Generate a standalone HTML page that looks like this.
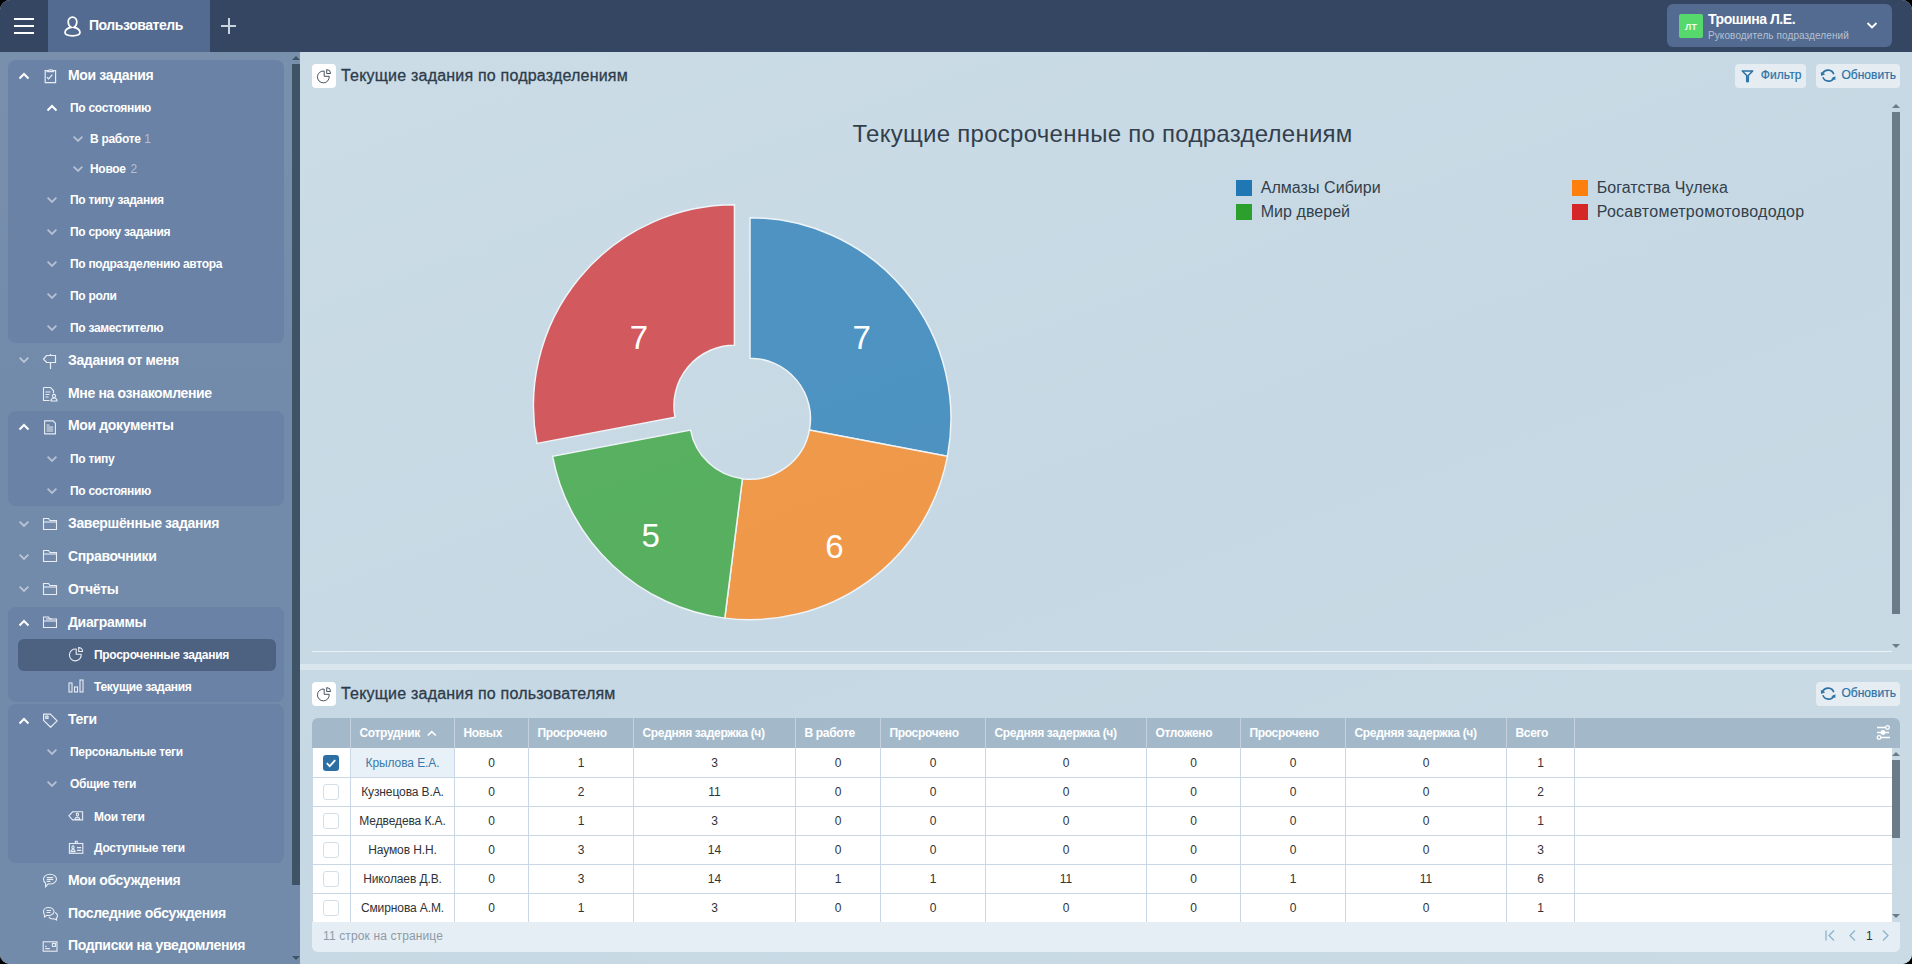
<!DOCTYPE html><html><head><meta charset="utf-8"><style>
html,body{margin:0;padding:0;background:#000;}
body{width:1912px;height:964px;overflow:hidden;position:relative;font-family:"Liberation Sans", sans-serif;}
.win{position:absolute;left:0;top:0;width:1912px;height:964px;border-radius:10px;overflow:hidden;background:#c8dae5;}
.t{position:absolute;white-space:nowrap;}
.b{position:absolute;}
</style></head><body><div class="win">

<div class="b" style="left:300px;top:52px;width:1612px;height:912px;background:linear-gradient(160deg,#cbdce7 0%,#c6d8e3 50%,#cadbe6 100%);"></div>
<div class="b" style="left:0px;top:52px;width:300px;height:912px;background:linear-gradient(180deg,#7990ad 0%,#738bab 35%,#728baa 100%);"></div>
<div class="b" style="left:0px;top:0px;width:1912px;height:52px;background:#344662;"></div>
<div class="b" style="left:48px;top:0px;width:162px;height:52px;background:#546b91;"></div>
<div class="b" style="left:14px;top:18px;width:20px;height:2px;background:#ffffff;"></div>
<div class="b" style="left:14px;top:25px;width:20px;height:2px;background:#ffffff;"></div>
<div class="b" style="left:14px;top:32px;width:20px;height:2px;background:#ffffff;"></div>
<svg class="b" style="left:63px;top:15px;" width="19" height="23" viewBox="0 0 19 23"><path d="M9.5 2.2c-2.6 0-4.3 2-4.3 4.6 0 2.3 1.3 4.6 2.9 5.5-3.7.7-6.1 2.7-6.1 5.3 0 2.2 2.6 3.2 7.5 3.2s7.5-1 7.5-3.2c0-2.6-2.4-4.6-6.1-5.3 1.6-.9 2.9-3.2 2.9-5.5 0-2.6-1.7-4.6-4.3-4.6z" fill="none" stroke="#fff" stroke-width="1.7"/></svg>
<div class="t" style="left:89px;top:16.37px;font-size:14px;line-height:18px;color:#fff;font-weight:bold;letter-spacing:-0.45px;">Пользователь</div>
<div class="b" style="left:221px;top:25px;width:15px;height:2px;background:#c9d3df;"></div>
<div class="b" style="left:227.5px;top:18px;width:2px;height:16px;background:#c9d3df;"></div>
<div class="b" style="left:1667px;top:4px;width:225px;height:43px;background:#546b91;border-radius:6px;"></div>
<div class="b" style="left:1679px;top:14px;width:24px;height:24px;background:#57d86d;border-radius:2px;"></div>
<div class="t" style="left:1679.0px;width:24px;text-align:center;top:20.76px;font-size:9.5px;line-height:12px;color:#fff;-webkit-text-stroke:0.2px #fff;">ЛТ</div>
<div class="t" style="left:1708px;top:10.37px;font-size:14px;line-height:18px;color:#fff;font-weight:bold;letter-spacing:-0.45px;">Трошина Л.Е.</div>
<div class="t" style="left:1708px;top:29.99px;font-size:10px;line-height:12px;color:#b4c0d0;letter-spacing:0.1px;">Руководитель подразделений</div>
<svg class="b" style="left:1866px;top:21px;" width="12" height="9" viewBox="0 0 12 9"><path d="M1.5 2l4.5 4.5 4.5-4.5" fill="none" stroke="#fff" stroke-width="1.8"/></svg>
<div class="b" style="left:8px;top:60px;width:276px;height:283px;background:#6a82a6;border-radius:8px;"></div>
<div class="b" style="left:8px;top:411px;width:276px;height:95px;background:#6a82a6;border-radius:8px;"></div>
<div class="b" style="left:8px;top:607px;width:276px;height:95px;background:#6a82a6;border-radius:8px;"></div>
<div class="b" style="left:8px;top:704px;width:276px;height:159px;background:#6a82a6;border-radius:8px;"></div>
<div class="b" style="left:18px;top:639px;width:258px;height:32px;background:#4d6181;border-radius:6px;"></div>
<svg class="b" style="left:292px;top:55px;" width="8" height="6" viewBox="0 0 8 6"><path d="M0 5L4 1L8 5z" fill="#3f5366"/></svg>
<div class="b" style="left:292px;top:64px;width:8px;height:821px;background:#3f5366;"></div>
<svg class="b" style="left:292px;top:955px;" width="8" height="6" viewBox="0 0 8 6"><path d="M0 1L4 5L8 1z" fill="#3f5366"/></svg>
<svg class="b" style="left:18px;top:72px;" width="12" height="8" viewBox="0 0 12 8"><path d="M1.5 6.5L6 2L10.5 6.5" fill="none" stroke="#fff" stroke-width="2"/></svg>
<svg class="b" style="left:42px;top:68px;margin-left:1px" width="16" height="16" viewBox="0 0 16 16"><g fill="none" stroke="#e8edf4" stroke-width="1.2"><path d="M4.3 2.6H2.2V14.7H12.6V2.6H10.5"/><path d="M4.3 3.6C4.3 1.4 10.5 1.4 10.5 3.6Z"/><path d="M3.9 9.3L5.6 10.8L9.4 6.6"/></g></svg>
<div class="t" style="left:68px;top:65.87px;font-size:14px;line-height:18px;color:#fff;font-weight:bold;letter-spacing:-0.35px;">Мои задания</div>
<svg class="b" style="left:46px;top:104px;" width="12" height="8" viewBox="0 0 12 8"><path d="M1.5 6.5L6 2L10.5 6.5" fill="none" stroke="#fff" stroke-width="2"/></svg>
<div class="t" style="left:70px;top:101.43px;font-size:12px;line-height:15px;color:#fff;font-weight:bold;letter-spacing:-0.3px;">По состоянию</div>
<svg class="b" style="left:72px;top:135.0px;" width="12" height="8" viewBox="0 0 12 8"><path d="M1.6 1.6L6 6L10.4 1.6" fill="none" stroke="rgba(255,255,255,0.5)" stroke-width="1.8"/></svg>
<div class="t" style="left:90px;top:132.23px;font-size:12px;line-height:15px;color:#fff;font-weight:bold;letter-spacing:-0.3px;">В работе</div>
<svg class="b" style="left:72px;top:165.0px;" width="12" height="8" viewBox="0 0 12 8"><path d="M1.6 1.6L6 6L10.4 1.6" fill="none" stroke="rgba(255,255,255,0.5)" stroke-width="1.8"/></svg>
<div class="t" style="left:90px;top:162.23px;font-size:12px;line-height:15px;color:#fff;font-weight:bold;letter-spacing:-0.3px;">Новое</div>
<svg class="b" style="left:46px;top:195.89999999999998px;" width="12" height="8" viewBox="0 0 12 8"><path d="M1.6 1.6L6 6L10.4 1.6" fill="none" stroke="rgba(255,255,255,0.5)" stroke-width="1.8"/></svg>
<div class="t" style="left:70px;top:193.13px;font-size:12px;line-height:15px;color:#fff;font-weight:bold;letter-spacing:-0.3px;">По типу задания</div>
<svg class="b" style="left:46px;top:227.89999999999998px;" width="12" height="8" viewBox="0 0 12 8"><path d="M1.6 1.6L6 6L10.4 1.6" fill="none" stroke="rgba(255,255,255,0.5)" stroke-width="1.8"/></svg>
<div class="t" style="left:70px;top:225.13px;font-size:12px;line-height:15px;color:#fff;font-weight:bold;letter-spacing:-0.3px;">По сроку задания</div>
<svg class="b" style="left:46px;top:259.8px;" width="12" height="8" viewBox="0 0 12 8"><path d="M1.6 1.6L6 6L10.4 1.6" fill="none" stroke="rgba(255,255,255,0.5)" stroke-width="1.8"/></svg>
<div class="t" style="left:70px;top:257.03px;font-size:12px;line-height:15px;color:#fff;font-weight:bold;letter-spacing:-0.3px;">По подразделению автора</div>
<svg class="b" style="left:46px;top:291.8px;" width="12" height="8" viewBox="0 0 12 8"><path d="M1.6 1.6L6 6L10.4 1.6" fill="none" stroke="rgba(255,255,255,0.5)" stroke-width="1.8"/></svg>
<div class="t" style="left:70px;top:289.03px;font-size:12px;line-height:15px;color:#fff;font-weight:bold;letter-spacing:-0.3px;">По роли</div>
<svg class="b" style="left:46px;top:323.8px;" width="12" height="8" viewBox="0 0 12 8"><path d="M1.6 1.6L6 6L10.4 1.6" fill="none" stroke="rgba(255,255,255,0.5)" stroke-width="1.8"/></svg>
<div class="t" style="left:70px;top:321.03px;font-size:12px;line-height:15px;color:#fff;font-weight:bold;letter-spacing:-0.3px;">По заместителю</div>
<svg class="b" style="left:18px;top:356.4px;" width="12" height="8" viewBox="0 0 12 8"><path d="M1.6 1.6L6 6L10.4 1.6" fill="none" stroke="rgba(255,255,255,0.5)" stroke-width="1.8"/></svg>
<svg class="b" style="left:42px;top:353px;" width="16" height="16" viewBox="0 0 16 16"><g fill="none" stroke="#e8edf4" stroke-width="1.2"><path d="M4.5 2.5h9v7h-9L1.5 6z"/><path d="M8.5 9.5v6.5M8.5 1v1.5"/></g></svg>
<div class="t" style="left:68px;top:350.87px;font-size:14px;line-height:18px;color:#fff;font-weight:bold;letter-spacing:-0.35px;">Задания от меня</div>
<svg class="b" style="left:42px;top:386px;" width="16" height="16" viewBox="0 0 16 16"><g fill="none" stroke="#e8edf4" stroke-width="1.1"><path d="M1.5 1.5h7l3 3v3"/><path d="M1.5 1.5v13h6"/><path d="M3.5 6h5M3.5 8.5h4M3.5 11h3"/><circle cx="12" cy="10" r="1.6"/><path d="M9 15c0-1.8 1.3-3 3-3s3 1.2 3 3z"/></g></svg>
<div class="t" style="left:68px;top:383.87px;font-size:14px;line-height:18px;color:#fff;font-weight:bold;letter-spacing:-0.35px;">Мне на ознакомление</div>
<svg class="b" style="left:18px;top:422.6px;" width="12" height="8" viewBox="0 0 12 8"><path d="M1.5 6.5L6 2L10.5 6.5" fill="none" stroke="#fff" stroke-width="2"/></svg>
<svg class="b" style="left:42px;top:418.6px;margin-left:1px" width="16" height="16" viewBox="0 0 16 16"><g fill="none" stroke="#e8edf4" stroke-width="1.1"><path d="M1.6 1.9H10L12.4 4.3V14.9H1.6Z"/><path d="M3.6 6h2.8M3.6 8h6.6M3.6 10h6.6M3.6 12h6.6"/></g></svg>
<div class="t" style="left:68px;top:416.47px;font-size:14px;line-height:18px;color:#fff;font-weight:bold;letter-spacing:-0.35px;">Мои документы</div>
<svg class="b" style="left:46px;top:454.9px;" width="12" height="8" viewBox="0 0 12 8"><path d="M1.6 1.6L6 6L10.4 1.6" fill="none" stroke="rgba(255,255,255,0.5)" stroke-width="1.8"/></svg>
<div class="t" style="left:70px;top:452.13px;font-size:12px;line-height:15px;color:#fff;font-weight:bold;letter-spacing:-0.3px;">По типу</div>
<svg class="b" style="left:46px;top:486.9px;" width="12" height="8" viewBox="0 0 12 8"><path d="M1.6 1.6L6 6L10.4 1.6" fill="none" stroke="rgba(255,255,255,0.5)" stroke-width="1.8"/></svg>
<div class="t" style="left:70px;top:484.13px;font-size:12px;line-height:15px;color:#fff;font-weight:bold;letter-spacing:-0.3px;">По состоянию</div>
<svg class="b" style="left:18px;top:519.9px;" width="12" height="8" viewBox="0 0 12 8"><path d="M1.6 1.6L6 6L10.4 1.6" fill="none" stroke="rgba(255,255,255,0.5)" stroke-width="1.8"/></svg>
<svg class="b" style="left:42px;top:516.5px;" width="16" height="14" viewBox="0 0 16 14"><g fill="none" stroke="#e8edf4" stroke-width="1.1"><path d="M1.5 1.5h5l1.5 2h6.5v9h-13z"/><path d="M1.5 5h13"/></g></svg>
<div class="t" style="left:68px;top:514.37px;font-size:14px;line-height:18px;color:#fff;font-weight:bold;letter-spacing:-0.35px;">Завершённые задания</div>
<svg class="b" style="left:18px;top:552.8px;" width="12" height="8" viewBox="0 0 12 8"><path d="M1.6 1.6L6 6L10.4 1.6" fill="none" stroke="rgba(255,255,255,0.5)" stroke-width="1.8"/></svg>
<svg class="b" style="left:42px;top:549.4px;" width="16" height="14" viewBox="0 0 16 14"><g fill="none" stroke="#e8edf4" stroke-width="1.1"><path d="M1.5 1.5h5l1.5 2h6.5v9h-13z"/><path d="M1.5 5h13"/></g></svg>
<div class="t" style="left:68px;top:547.27px;font-size:14px;line-height:18px;color:#fff;font-weight:bold;letter-spacing:-0.35px;">Справочники</div>
<svg class="b" style="left:18px;top:585.1px;" width="12" height="8" viewBox="0 0 12 8"><path d="M1.6 1.6L6 6L10.4 1.6" fill="none" stroke="rgba(255,255,255,0.5)" stroke-width="1.8"/></svg>
<svg class="b" style="left:42px;top:581.7px;" width="16" height="14" viewBox="0 0 16 14"><g fill="none" stroke="#e8edf4" stroke-width="1.1"><path d="M1.5 1.5h5l1.5 2h6.5v9h-13z"/><path d="M1.5 5h13"/></g></svg>
<div class="t" style="left:68px;top:579.57px;font-size:14px;line-height:18px;color:#fff;font-weight:bold;letter-spacing:-0.35px;">Отчёты</div>
<svg class="b" style="left:18px;top:619.3px;" width="12" height="8" viewBox="0 0 12 8"><path d="M1.5 6.5L6 2L10.5 6.5" fill="none" stroke="#fff" stroke-width="2"/></svg>
<svg class="b" style="left:42px;top:615.3px;" width="16" height="14" viewBox="0 0 16 14"><g fill="none" stroke="#e8edf4" stroke-width="1.1"><path d="M1.5 2h5l1.5 2h6.5v8.5h-13z"/><path d="M1.5 6h13"/><path d="M4 4h6"/></g></svg>
<div class="t" style="left:68px;top:613.17px;font-size:14px;line-height:18px;color:#fff;font-weight:bold;letter-spacing:-0.35px;">Диаграммы</div>
<svg class="b" style="left:68px;top:647px;" width="16" height="15" viewBox="0 0 16 15"><g fill="none" stroke="#e8edf4" stroke-width="1.1"><path d="M8.2 2.1A5.9 5.9 0 1 0 13.2 7.3H8.2Z"/><path d="M10.7 0.6V4.5H14.6A3.9 3.9 0 0 0 10.7 0.6Z"/></g></svg>
<div class="t" style="left:94px;top:648.43px;font-size:12px;line-height:15px;color:#fff;font-weight:bold;letter-spacing:-0.3px;">Просроченные задания</div>
<svg class="b" style="left:68px;top:679px;" width="16" height="14" viewBox="0 0 16 14"><g fill="none" stroke="#e8edf4" stroke-width="1.1"><rect x="1" y="4" width="3" height="9"/><rect x="6.5" y="8" width="3" height="5"/><rect x="12" y="1" width="3" height="12"/></g></svg>
<div class="t" style="left:94px;top:680.43px;font-size:12px;line-height:15px;color:#fff;font-weight:bold;letter-spacing:-0.3px;">Текущие задания</div>
<svg class="b" style="left:18px;top:716.6px;" width="12" height="8" viewBox="0 0 12 8"><path d="M1.5 6.5L6 2L10.5 6.5" fill="none" stroke="#fff" stroke-width="2"/></svg>
<svg class="b" style="left:42px;top:712.6px;margin-left:1px" width="16" height="16" viewBox="0 0 16 16"><g fill="none" stroke="#e8edf4" stroke-width="1.2" stroke-linejoin="round"><path d="M0.6 1.1H7.4L14.1 7.9L7.6 14.2L0.6 7.4Z"/><rect x="2.8" y="3.2" width="2.2" height="2.2"/></g></svg>
<div class="t" style="left:68px;top:710.47px;font-size:14px;line-height:18px;color:#fff;font-weight:bold;letter-spacing:-0.35px;">Теги</div>
<svg class="b" style="left:46px;top:748.2px;" width="12" height="8" viewBox="0 0 12 8"><path d="M1.6 1.6L6 6L10.4 1.6" fill="none" stroke="rgba(255,255,255,0.5)" stroke-width="1.8"/></svg>
<div class="t" style="left:70px;top:745.43px;font-size:12px;line-height:15px;color:#fff;font-weight:bold;letter-spacing:-0.3px;">Персональные теги</div>
<svg class="b" style="left:46px;top:780.2px;" width="12" height="8" viewBox="0 0 12 8"><path d="M1.6 1.6L6 6L10.4 1.6" fill="none" stroke="rgba(255,255,255,0.5)" stroke-width="1.8"/></svg>
<div class="t" style="left:70px;top:777.43px;font-size:12px;line-height:15px;color:#fff;font-weight:bold;letter-spacing:-0.3px;">Общие теги</div>
<svg class="b" style="left:68px;top:810.5px;" width="16" height="12" viewBox="0 0 16 12"><g fill="none" stroke="#e8edf4" stroke-width="1.1"><path d="M4.6 0.8H14.6V8.9H4.6L0.9 4.85Z"/><ellipse cx="9.4" cy="3.6" rx="1.1" ry="1.5"/><path d="M7.2 8.4V7.6C7.2 6.7 8.2 6.3 9.4 6.3S11.6 6.7 11.6 7.6V8.4Z"/></g></svg>
<div class="t" style="left:94px;top:809.93px;font-size:12px;line-height:15px;color:#fff;font-weight:bold;letter-spacing:-0.3px;">Мои теги</div>
<svg class="b" style="left:68px;top:840px;" width="16" height="16" viewBox="0 0 16 16"><g fill="none" stroke="#e8edf4" stroke-width="1.1"><rect x="1.4" y="3.5" width="13.4" height="9.8"/><path d="M7.4 3.5V1.2H9.2V3.5"/><ellipse cx="5" cy="7.3" rx="1.1" ry="1.4"/><path d="M3 11.6V10.8C3 10 3.9 9.6 5 9.6S7 10 7 10.8V11.6Z"/><path d="M9 7.6h4.2M9 10.4h4.2"/></g></svg>
<div class="t" style="left:94px;top:841.43px;font-size:12px;line-height:15px;color:#fff;font-weight:bold;letter-spacing:-0.3px;">Доступные теги</div>
<svg class="b" style="left:42px;top:872.8px;" width="16" height="16" viewBox="0 0 16 16"><g fill="none" stroke="#e8edf4" stroke-width="1.1"><path d="M8 1.2c3.6 0 6.5 2.1 6.5 4.9s-2.9 4.9-6.5 4.9c-.6 0-1.2-.1-1.8-.2L3.6 13.8V10.2C2.3 9.3 1.5 7.8 1.5 6.1c0-2.8 2.9-4.9 6.5-4.9z"/><path d="M4.8 4.6h6.4M4.8 6.5h6.4M4.8 8.4h3.6"/></g></svg>
<div class="t" style="left:68px;top:870.67px;font-size:14px;line-height:18px;color:#fff;font-weight:bold;letter-spacing:-0.35px;">Мои обсуждения</div>
<svg class="b" style="left:42px;top:906px;" width="17" height="16" viewBox="0 0 17 16"><g fill="none" stroke="#e8edf4" stroke-width="1.1"><path d="M6.5 1.5c3 0 5.5 1.8 5.5 4s-2.5 4-5.5 4c-.6 0-1.1 0-1.6-.2L2.5 11V8.6C1.8 7.8 1.5 6.7 1.5 5.5c0-2.2 2.2-4 5-4z"/><path d="M4.5 4.5h4.5M4.5 6.5h4"/><path d="M13 6.5c1.5.7 2.5 1.9 2.5 3.3 0 1-.4 1.8-1 2.5V14l-2-1.2c-.5.1-.9.2-1.5.2-2 0-3.6-.9-4.2-2.2"/></g></svg>
<div class="t" style="left:68px;top:903.87px;font-size:14px;line-height:18px;color:#fff;font-weight:bold;letter-spacing:-0.35px;">Последние обсуждения</div>
<svg class="b" style="left:42px;top:940.5px;" width="16" height="12" viewBox="0 0 16 12"><g fill="none" stroke="#e8edf4" stroke-width="1.1"><rect x="1.2" y="0.8" width="13.8" height="9.4"/><path d="M3.2 7.6h4.6M3.2 5.4h1.4"/><rect x="10.4" y="2.4" width="3" height="3"/></g></svg>
<div class="t" style="left:68px;top:936.37px;font-size:14px;line-height:18px;color:#fff;font-weight:bold;letter-spacing:-0.35px;">Подписки на уведомления</div>
<div class="t" style="left:144.3px;top:132.23px;font-size:12px;line-height:15px;color:rgba(255,255,255,0.5);">1</div>
<div class="t" style="left:130.5px;top:162.23px;font-size:12px;line-height:15px;color:rgba(255,255,255,0.5);">2</div>
<div class="b" style="left:312px;top:64px;width:24px;height:24px;background:#ffffff;border-radius:4px;"></div>
<svg class="b" style="left:316px;top:69px;" width="16" height="15" viewBox="0 0 16 15"><g fill="none" stroke="#34404d" stroke-width="0.9"><path d="M8.2 2.1A5.9 5.9 0 1 0 13.2 7.3H8.2Z"/><path d="M10.7 0.6V4.5H14.6A3.9 3.9 0 0 0 10.7 0.6Z"/></g></svg>
<div class="t" style="left:341px;top:65.91px;font-size:16px;line-height:20px;color:#2d3b4b;letter-spacing:0.2px;-webkit-text-stroke:0.3px #2d3b4b;">Текущие задания по подразделениям</div>
<div class="b" style="left:1735px;top:64px;width:71px;height:24px;background:#e5edf3;border-radius:4px;"></div>
<svg class="b" style="left:1740px;top:69px;" width="15" height="15" viewBox="0 0 15 15"><path d="M2.3 1.9H12.7L8.3 6.6V11.9A0.8 0.8 0 0 1 6.7 11.9V6.6Z" fill="none" stroke="#2b72a6" stroke-width="1.5" stroke-linejoin="round"/></svg>
<div class="t" style="left:1760.7px;top:68.43px;font-size:12px;line-height:15px;color:#2b72a6;letter-spacing:0.1px;-webkit-text-stroke:0.2px #2b72a6;">Фильтр</div>
<div class="b" style="left:1816px;top:64px;width:84px;height:24px;background:#e5edf3;border-radius:4px;"></div>
<svg class="b" style="left:1819px;top:68px;" width="18" height="17" viewBox="0 0 18 17"><g fill="none" stroke="#2b72a6" stroke-width="1.6"><path d="M14.8 6.3A6.1 6.1 0 0 0 3.6 5.4"/><path d="M3.9 9.3A6.1 6.1 0 0 0 15.1 9.6"/></g><path d="M1.8 4L2.2 8L6.3 6.2z" fill="#2b72a6"/><path d="M16.5 8.2L16.3 11.9L12.3 10.2z" fill="#2b72a6"/></svg>
<div class="t" style="left:1841.4px;top:68.43px;font-size:12px;line-height:15px;color:#2b72a6;letter-spacing:0.03px;-webkit-text-stroke:0.2px #2b72a6;">Обновить</div>
<div class="t" style="left:852.5px;top:118.87px;font-size:24px;line-height:30px;color:#333f4c;letter-spacing:0.27px;">Текущие просроченные по подразделениям</div>
<div class="b" style="left:1236px;top:180px;width:16px;height:16px;background:#1f77b4;"></div>
<div class="t" style="left:1260.7px;top:178.11px;font-size:16px;line-height:20px;color:#333f4c;letter-spacing:0.05px;">Алмазы Сибири</div>
<div class="b" style="left:1236px;top:204px;width:16px;height:16px;background:#2ca02c;"></div>
<div class="t" style="left:1260.7px;top:202.11px;font-size:16px;line-height:20px;color:#333f4c;letter-spacing:0.05px;">Мир дверей</div>
<div class="b" style="left:1572px;top:180px;width:16px;height:16px;background:#ff7f0e;"></div>
<div class="t" style="left:1596.7px;top:178.11px;font-size:16px;line-height:20px;color:#333f4c;letter-spacing:0.05px;">Богатства Чулека</div>
<div class="b" style="left:1572px;top:204px;width:16px;height:16px;background:#d62728;"></div>
<div class="t" style="left:1596.7px;top:202.11px;font-size:16px;line-height:20px;color:#333f4c;letter-spacing:0.25px;">Росавтометромотовододор</div>
<svg class="b" style="left:0;top:0" width="1912" height="964"><path d="M750.00,217.70A201,201 0 0 1 947.44,456.36L809.43,430.04A60.5,60.5 0 0 0 750.00,358.20Z" fill="#1f77b4" fill-opacity="0.72" stroke="#eef4f8" stroke-width="1.5"/><path d="M947.44,456.36A201,201 0 0 1 724.81,618.12L742.42,478.72A60.5,60.5 0 0 0 809.43,430.04Z" fill="#ff7f0e" fill-opacity="0.72" stroke="#eef4f8" stroke-width="1.5"/><path d="M724.81,618.12A201,201 0 0 1 552.56,456.36L690.57,430.04A60.5,60.5 0 0 0 742.42,478.72Z" fill="#2ca02c" fill-opacity="0.72" stroke="#eef4f8" stroke-width="1.5"/><path d="M537.00,443.49A201,201 0 0 1 734.44,204.82L734.44,345.32A60.5,60.5 0 0 0 675.01,417.16Z" fill="#d62728" fill-opacity="0.72" stroke="#eef4f8" stroke-width="1.5"/><text x="638.9" y="348.9" font-family="Liberation Sans" font-size="33" fill="#fff" text-anchor="middle">7</text><text x="861.7" y="348.9" font-family="Liberation Sans" font-size="33" fill="#fff" text-anchor="middle">7</text><text x="650.8" y="546.7" font-family="Liberation Sans" font-size="33" fill="#fff" text-anchor="middle">5</text><text x="834.5" y="557.9" font-family="Liberation Sans" font-size="33" fill="#fff" text-anchor="middle">6</text></svg>
<svg class="b" style="left:1892px;top:103px;" width="8" height="6" viewBox="0 0 8 6"><path d="M0 5L4 1L8 5z" fill="#6b7c88"/></svg>
<div class="b" style="left:1892px;top:112px;width:8px;height:502px;background:#6b7c88;"></div>
<svg class="b" style="left:1892px;top:643px;" width="8" height="6" viewBox="0 0 8 6"><path d="M0 1L4 5L8 1z" fill="#6b7c88"/></svg>
<div class="b" style="left:312px;top:651px;width:1580px;height:1px;background:#eaf2f7;"></div>
<div class="b" style="left:300px;top:664px;width:1612px;height:6px;background:#d9e6ee;"></div>
<div class="b" style="left:312px;top:682px;width:24px;height:24px;background:#ffffff;border-radius:4px;"></div>
<svg class="b" style="left:316px;top:687px;" width="16" height="15" viewBox="0 0 16 15"><g fill="none" stroke="#34404d" stroke-width="0.9"><path d="M8.2 2.1A5.9 5.9 0 1 0 13.2 7.3H8.2Z"/><path d="M10.7 0.6V4.5H14.6A3.9 3.9 0 0 0 10.7 0.6Z"/></g></svg>
<div class="t" style="left:341px;top:684.01px;font-size:16px;line-height:20px;color:#2d3b4b;letter-spacing:0.2px;-webkit-text-stroke:0.3px #2d3b4b;">Текущие задания по пользователям</div>
<div class="b" style="left:1816px;top:682px;width:84px;height:24px;background:#e5edf3;border-radius:4px;"></div>
<svg class="b" style="left:1819px;top:686px;" width="18" height="17" viewBox="0 0 18 17"><g fill="none" stroke="#2b72a6" stroke-width="1.6"><path d="M14.8 6.3A6.1 6.1 0 0 0 3.6 5.4"/><path d="M3.9 9.3A6.1 6.1 0 0 0 15.1 9.6"/></g><path d="M1.8 4L2.2 8L6.3 6.2z" fill="#2b72a6"/><path d="M16.5 8.2L16.3 11.9L12.3 10.2z" fill="#2b72a6"/></svg>
<div class="t" style="left:1841.4px;top:686.43px;font-size:12px;line-height:15px;color:#2b72a6;letter-spacing:0.03px;-webkit-text-stroke:0.2px #2b72a6;">Обновить</div>
<div class="b" style="left:312px;top:718px;width:1588px;height:30px;background:#a3b9ca;border-radius:6px 6px 0 0;"></div>
<div class="b" style="left:312px;top:748px;width:1580px;height:174px;background:#ffffff;"></div>
<div class="b" style="left:312px;top:922px;width:1588px;height:30px;background:#e6eef5;border-radius:0 0 6px 6px;"></div>
<div class="b" style="left:350px;top:748px;width:104px;height:29px;background:#e9f1f8;"></div>
<div class="b" style="left:350px;top:718px;width:1px;height:30px;background:#c3d2de;"></div>
<div class="b" style="left:350px;top:748px;width:1px;height:174px;background:#c9d8e4;"></div>
<div class="b" style="left:454px;top:718px;width:1px;height:30px;background:#c3d2de;"></div>
<div class="b" style="left:454px;top:748px;width:1px;height:174px;background:#c9d8e4;"></div>
<div class="b" style="left:528px;top:718px;width:1px;height:30px;background:#c3d2de;"></div>
<div class="b" style="left:528px;top:748px;width:1px;height:174px;background:#c9d8e4;"></div>
<div class="b" style="left:633px;top:718px;width:1px;height:30px;background:#c3d2de;"></div>
<div class="b" style="left:633px;top:748px;width:1px;height:174px;background:#c9d8e4;"></div>
<div class="b" style="left:795px;top:718px;width:1px;height:30px;background:#c3d2de;"></div>
<div class="b" style="left:795px;top:748px;width:1px;height:174px;background:#c9d8e4;"></div>
<div class="b" style="left:880px;top:718px;width:1px;height:30px;background:#c3d2de;"></div>
<div class="b" style="left:880px;top:748px;width:1px;height:174px;background:#c9d8e4;"></div>
<div class="b" style="left:985px;top:718px;width:1px;height:30px;background:#c3d2de;"></div>
<div class="b" style="left:985px;top:748px;width:1px;height:174px;background:#c9d8e4;"></div>
<div class="b" style="left:1146px;top:718px;width:1px;height:30px;background:#c3d2de;"></div>
<div class="b" style="left:1146px;top:748px;width:1px;height:174px;background:#c9d8e4;"></div>
<div class="b" style="left:1240px;top:718px;width:1px;height:30px;background:#c3d2de;"></div>
<div class="b" style="left:1240px;top:748px;width:1px;height:174px;background:#c9d8e4;"></div>
<div class="b" style="left:1345px;top:718px;width:1px;height:30px;background:#c3d2de;"></div>
<div class="b" style="left:1345px;top:748px;width:1px;height:174px;background:#c9d8e4;"></div>
<div class="b" style="left:1506px;top:718px;width:1px;height:30px;background:#c3d2de;"></div>
<div class="b" style="left:1506px;top:748px;width:1px;height:174px;background:#c9d8e4;"></div>
<div class="b" style="left:1574px;top:718px;width:1px;height:30px;background:#c3d2de;"></div>
<div class="b" style="left:1574px;top:748px;width:1px;height:174px;background:#c9d8e4;"></div>
<div class="b" style="left:312px;top:748px;width:1px;height:174px;background:#c9d8e4;"></div>
<div class="b" style="left:312px;top:777px;width:1580px;height:1px;background:#c9d8e4;"></div>
<div class="b" style="left:312px;top:806px;width:1580px;height:1px;background:#c9d8e4;"></div>
<div class="b" style="left:312px;top:835px;width:1580px;height:1px;background:#c9d8e4;"></div>
<div class="b" style="left:312px;top:864px;width:1580px;height:1px;background:#c9d8e4;"></div>
<div class="b" style="left:312px;top:893px;width:1580px;height:1px;background:#c9d8e4;"></div>
<div class="t" style="left:359.4px;top:725.53px;font-size:12px;line-height:15px;color:#fff;font-weight:bold;letter-spacing:-0.3px;">Сотрудник</div>
<div class="t" style="left:463.4px;top:725.53px;font-size:12px;line-height:15px;color:#fff;font-weight:bold;letter-spacing:-0.3px;">Новых</div>
<div class="t" style="left:537.4px;top:725.53px;font-size:12px;line-height:15px;color:#fff;font-weight:bold;letter-spacing:-0.3px;">Просрочено</div>
<div class="t" style="left:642.4px;top:725.53px;font-size:12px;line-height:15px;color:#fff;font-weight:bold;letter-spacing:-0.3px;">Средняя задержка (ч)</div>
<div class="t" style="left:804.4px;top:725.53px;font-size:12px;line-height:15px;color:#fff;font-weight:bold;letter-spacing:-0.3px;">В работе</div>
<div class="t" style="left:889.4px;top:725.53px;font-size:12px;line-height:15px;color:#fff;font-weight:bold;letter-spacing:-0.3px;">Просрочено</div>
<div class="t" style="left:994.4px;top:725.53px;font-size:12px;line-height:15px;color:#fff;font-weight:bold;letter-spacing:-0.3px;">Средняя задержка (ч)</div>
<div class="t" style="left:1155.4px;top:725.53px;font-size:12px;line-height:15px;color:#fff;font-weight:bold;letter-spacing:-0.3px;">Отложено</div>
<div class="t" style="left:1249.4px;top:725.53px;font-size:12px;line-height:15px;color:#fff;font-weight:bold;letter-spacing:-0.3px;">Просрочено</div>
<div class="t" style="left:1354.4px;top:725.53px;font-size:12px;line-height:15px;color:#fff;font-weight:bold;letter-spacing:-0.3px;">Средняя задержка (ч)</div>
<div class="t" style="left:1515.4px;top:725.53px;font-size:12px;line-height:15px;color:#fff;font-weight:bold;letter-spacing:-0.3px;">Всего</div>
<svg class="b" style="left:425.5px;top:728.5px;" width="12" height="8" viewBox="0 0 12 8"><path d="M1.8 6.5L5.8 2.6L9.8 6.5" fill="none" stroke="#fff" stroke-width="1.6"/></svg>
<svg class="b" style="left:1876px;top:724px;" width="15" height="17" viewBox="0 0 15 17"><g fill="none" stroke="#fff" stroke-width="1.3"><path d="M1 3.5h9M1 8.5h12M5 13.5h9"/><circle cx="11.5" cy="3.5" r="1.8" fill="#a3b9ca"/><circle cx="7" cy="8.5" r="1.8" fill="#fff"/><circle cx="3" cy="13.5" r="1.8" fill="#a3b9ca"/></g></svg>
<div class="b" style="left:323px;top:755px;width:16px;height:16px;background:#2c6fa3;border-radius:3px;"></div>
<svg class="b" style="left:323px;top:755px;" width="16" height="16" viewBox="0 0 16 16"><path d="M3.8 8.2l2.9 2.9 5.5-5.9" fill="none" stroke="#fff" stroke-width="1.8"/></svg>
<div class="t" style="left:350.5px;width:104px;text-align:center;top:755.53px;font-size:12px;line-height:15px;color:#3a7aab;letter-spacing:-0.1px;">Крылова Е.А.</div>
<div class="t" style="left:454.5px;width:74px;text-align:center;top:755.53px;font-size:12px;line-height:15px;color:#2f3338;">0</div>
<div class="t" style="left:528.5px;width:105px;text-align:center;top:755.53px;font-size:12px;line-height:15px;color:#2f3338;">1</div>
<div class="t" style="left:633.5px;width:162px;text-align:center;top:755.53px;font-size:12px;line-height:15px;color:#2f3338;">3</div>
<div class="t" style="left:795.5px;width:85px;text-align:center;top:755.53px;font-size:12px;line-height:15px;color:#2f3338;">0</div>
<div class="t" style="left:880.5px;width:105px;text-align:center;top:755.53px;font-size:12px;line-height:15px;color:#2f3338;">0</div>
<div class="t" style="left:985.5px;width:161px;text-align:center;top:755.53px;font-size:12px;line-height:15px;color:#2f3338;">0</div>
<div class="t" style="left:1146.5px;width:94px;text-align:center;top:755.53px;font-size:12px;line-height:15px;color:#2f3338;">0</div>
<div class="t" style="left:1240.5px;width:105px;text-align:center;top:755.53px;font-size:12px;line-height:15px;color:#2f3338;">0</div>
<div class="t" style="left:1345.5px;width:161px;text-align:center;top:755.53px;font-size:12px;line-height:15px;color:#2f3338;">0</div>
<div class="t" style="left:1506.5px;width:68px;text-align:center;top:755.53px;font-size:12px;line-height:15px;color:#2f3338;">1</div>
<div class="b" style="left:323px;top:784px;width:16px;height:16px;background:#fff;border-radius:3px;border:1px solid #d2dee8;box-sizing:border-box;"></div>
<div class="t" style="left:350.5px;width:104px;text-align:center;top:784.53px;font-size:12px;line-height:15px;color:#2f3338;letter-spacing:-0.1px;">Кузнецова В.А.</div>
<div class="t" style="left:454.5px;width:74px;text-align:center;top:784.53px;font-size:12px;line-height:15px;color:#2f3338;">0</div>
<div class="t" style="left:528.5px;width:105px;text-align:center;top:784.53px;font-size:12px;line-height:15px;color:#2f3338;">2</div>
<div class="t" style="left:633.5px;width:162px;text-align:center;top:784.53px;font-size:12px;line-height:15px;color:#2f3338;">11</div>
<div class="t" style="left:795.5px;width:85px;text-align:center;top:784.53px;font-size:12px;line-height:15px;color:#2f3338;">0</div>
<div class="t" style="left:880.5px;width:105px;text-align:center;top:784.53px;font-size:12px;line-height:15px;color:#2f3338;">0</div>
<div class="t" style="left:985.5px;width:161px;text-align:center;top:784.53px;font-size:12px;line-height:15px;color:#2f3338;">0</div>
<div class="t" style="left:1146.5px;width:94px;text-align:center;top:784.53px;font-size:12px;line-height:15px;color:#2f3338;">0</div>
<div class="t" style="left:1240.5px;width:105px;text-align:center;top:784.53px;font-size:12px;line-height:15px;color:#2f3338;">0</div>
<div class="t" style="left:1345.5px;width:161px;text-align:center;top:784.53px;font-size:12px;line-height:15px;color:#2f3338;">0</div>
<div class="t" style="left:1506.5px;width:68px;text-align:center;top:784.53px;font-size:12px;line-height:15px;color:#2f3338;">2</div>
<div class="b" style="left:323px;top:813px;width:16px;height:16px;background:#fff;border-radius:3px;border:1px solid #d2dee8;box-sizing:border-box;"></div>
<div class="t" style="left:350.5px;width:104px;text-align:center;top:813.53px;font-size:12px;line-height:15px;color:#2f3338;letter-spacing:-0.1px;">Медведева К.А.</div>
<div class="t" style="left:454.5px;width:74px;text-align:center;top:813.53px;font-size:12px;line-height:15px;color:#2f3338;">0</div>
<div class="t" style="left:528.5px;width:105px;text-align:center;top:813.53px;font-size:12px;line-height:15px;color:#2f3338;">1</div>
<div class="t" style="left:633.5px;width:162px;text-align:center;top:813.53px;font-size:12px;line-height:15px;color:#2f3338;">3</div>
<div class="t" style="left:795.5px;width:85px;text-align:center;top:813.53px;font-size:12px;line-height:15px;color:#2f3338;">0</div>
<div class="t" style="left:880.5px;width:105px;text-align:center;top:813.53px;font-size:12px;line-height:15px;color:#2f3338;">0</div>
<div class="t" style="left:985.5px;width:161px;text-align:center;top:813.53px;font-size:12px;line-height:15px;color:#2f3338;">0</div>
<div class="t" style="left:1146.5px;width:94px;text-align:center;top:813.53px;font-size:12px;line-height:15px;color:#2f3338;">0</div>
<div class="t" style="left:1240.5px;width:105px;text-align:center;top:813.53px;font-size:12px;line-height:15px;color:#2f3338;">0</div>
<div class="t" style="left:1345.5px;width:161px;text-align:center;top:813.53px;font-size:12px;line-height:15px;color:#2f3338;">0</div>
<div class="t" style="left:1506.5px;width:68px;text-align:center;top:813.53px;font-size:12px;line-height:15px;color:#2f3338;">1</div>
<div class="b" style="left:323px;top:842px;width:16px;height:16px;background:#fff;border-radius:3px;border:1px solid #d2dee8;box-sizing:border-box;"></div>
<div class="t" style="left:350.5px;width:104px;text-align:center;top:842.53px;font-size:12px;line-height:15px;color:#2f3338;letter-spacing:-0.1px;">Наумов Н.Н.</div>
<div class="t" style="left:454.5px;width:74px;text-align:center;top:842.53px;font-size:12px;line-height:15px;color:#2f3338;">0</div>
<div class="t" style="left:528.5px;width:105px;text-align:center;top:842.53px;font-size:12px;line-height:15px;color:#2f3338;">3</div>
<div class="t" style="left:633.5px;width:162px;text-align:center;top:842.53px;font-size:12px;line-height:15px;color:#2f3338;">14</div>
<div class="t" style="left:795.5px;width:85px;text-align:center;top:842.53px;font-size:12px;line-height:15px;color:#2f3338;">0</div>
<div class="t" style="left:880.5px;width:105px;text-align:center;top:842.53px;font-size:12px;line-height:15px;color:#2f3338;">0</div>
<div class="t" style="left:985.5px;width:161px;text-align:center;top:842.53px;font-size:12px;line-height:15px;color:#2f3338;">0</div>
<div class="t" style="left:1146.5px;width:94px;text-align:center;top:842.53px;font-size:12px;line-height:15px;color:#2f3338;">0</div>
<div class="t" style="left:1240.5px;width:105px;text-align:center;top:842.53px;font-size:12px;line-height:15px;color:#2f3338;">0</div>
<div class="t" style="left:1345.5px;width:161px;text-align:center;top:842.53px;font-size:12px;line-height:15px;color:#2f3338;">0</div>
<div class="t" style="left:1506.5px;width:68px;text-align:center;top:842.53px;font-size:12px;line-height:15px;color:#2f3338;">3</div>
<div class="b" style="left:323px;top:871px;width:16px;height:16px;background:#fff;border-radius:3px;border:1px solid #d2dee8;box-sizing:border-box;"></div>
<div class="t" style="left:350.5px;width:104px;text-align:center;top:871.53px;font-size:12px;line-height:15px;color:#2f3338;letter-spacing:-0.1px;">Николаев Д.В.</div>
<div class="t" style="left:454.5px;width:74px;text-align:center;top:871.53px;font-size:12px;line-height:15px;color:#2f3338;">0</div>
<div class="t" style="left:528.5px;width:105px;text-align:center;top:871.53px;font-size:12px;line-height:15px;color:#2f3338;">3</div>
<div class="t" style="left:633.5px;width:162px;text-align:center;top:871.53px;font-size:12px;line-height:15px;color:#2f3338;">14</div>
<div class="t" style="left:795.5px;width:85px;text-align:center;top:871.53px;font-size:12px;line-height:15px;color:#2f3338;">1</div>
<div class="t" style="left:880.5px;width:105px;text-align:center;top:871.53px;font-size:12px;line-height:15px;color:#2f3338;">1</div>
<div class="t" style="left:985.5px;width:161px;text-align:center;top:871.53px;font-size:12px;line-height:15px;color:#2f3338;">11</div>
<div class="t" style="left:1146.5px;width:94px;text-align:center;top:871.53px;font-size:12px;line-height:15px;color:#2f3338;">0</div>
<div class="t" style="left:1240.5px;width:105px;text-align:center;top:871.53px;font-size:12px;line-height:15px;color:#2f3338;">1</div>
<div class="t" style="left:1345.5px;width:161px;text-align:center;top:871.53px;font-size:12px;line-height:15px;color:#2f3338;">11</div>
<div class="t" style="left:1506.5px;width:68px;text-align:center;top:871.53px;font-size:12px;line-height:15px;color:#2f3338;">6</div>
<div class="b" style="left:323px;top:900px;width:16px;height:16px;background:#fff;border-radius:3px;border:1px solid #d2dee8;box-sizing:border-box;"></div>
<div class="t" style="left:350.5px;width:104px;text-align:center;top:900.53px;font-size:12px;line-height:15px;color:#2f3338;letter-spacing:-0.1px;">Смирнова А.М.</div>
<div class="t" style="left:454.5px;width:74px;text-align:center;top:900.53px;font-size:12px;line-height:15px;color:#2f3338;">0</div>
<div class="t" style="left:528.5px;width:105px;text-align:center;top:900.53px;font-size:12px;line-height:15px;color:#2f3338;">1</div>
<div class="t" style="left:633.5px;width:162px;text-align:center;top:900.53px;font-size:12px;line-height:15px;color:#2f3338;">3</div>
<div class="t" style="left:795.5px;width:85px;text-align:center;top:900.53px;font-size:12px;line-height:15px;color:#2f3338;">0</div>
<div class="t" style="left:880.5px;width:105px;text-align:center;top:900.53px;font-size:12px;line-height:15px;color:#2f3338;">0</div>
<div class="t" style="left:985.5px;width:161px;text-align:center;top:900.53px;font-size:12px;line-height:15px;color:#2f3338;">0</div>
<div class="t" style="left:1146.5px;width:94px;text-align:center;top:900.53px;font-size:12px;line-height:15px;color:#2f3338;">0</div>
<div class="t" style="left:1240.5px;width:105px;text-align:center;top:900.53px;font-size:12px;line-height:15px;color:#2f3338;">0</div>
<div class="t" style="left:1345.5px;width:161px;text-align:center;top:900.53px;font-size:12px;line-height:15px;color:#2f3338;">0</div>
<div class="t" style="left:1506.5px;width:68px;text-align:center;top:900.53px;font-size:12px;line-height:15px;color:#2f3338;">1</div>
<svg class="b" style="left:1892px;top:751px;" width="8" height="6" viewBox="0 0 8 6"><path d="M0 5L4 1L8 5z" fill="#6b7c88"/></svg>
<div class="b" style="left:1892px;top:760px;width:8px;height:78px;background:#6b7c88;"></div>
<svg class="b" style="left:1892px;top:913px;" width="8" height="6" viewBox="0 0 8 6"><path d="M0 1L4 5L8 1z" fill="#6b7c88"/></svg>
<div class="t" style="left:323px;top:928.53px;font-size:12px;line-height:15px;color:#8d9aa6;letter-spacing:0.13px;">11 строк на странице</div>
<svg class="b" style="left:1824px;top:929px;" width="12" height="12" viewBox="0 0 12 12"><g fill="none" stroke="#8cb3cc" stroke-width="1.3"><path d="M2 1.5v10"/><path d="M10 1.5L5 6.5l5 5"/></g></svg>
<svg class="b" style="left:1847px;top:929px;" width="10" height="12" viewBox="0 0 10 12"><path d="M8 1.5L3 6.5l5 5" fill="none" stroke="#8cb3cc" stroke-width="1.3"/></svg>
<div class="t" style="left:1866px;top:928.83px;font-size:12px;line-height:15px;color:#2f3338;">1</div>
<svg class="b" style="left:1881px;top:929px;" width="10" height="12" viewBox="0 0 10 12"><path d="M2 1.5l5 5-5 5" fill="none" stroke="#8cb3cc" stroke-width="1.3"/></svg>
</div></body></html>
